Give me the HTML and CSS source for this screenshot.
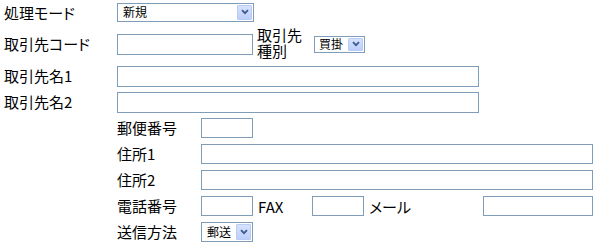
FILE: index.html
```
<!DOCTYPE html>
<html lang="ja">
<head>
<meta charset="utf-8">
<title>取引先登録</title>
<link rel="stylesheet" href="styles.css">
</head>
<body>
<form class="form">
  <div class="lbl">処理モード</div>
  <div class="cell">
    <div class="sel sel-mode"><span class="val">新規</span><span class="btn"><svg width="8" height="6" viewBox="0 0 8 6"><path d="M1 1.2 L4 4.2 L7 1.2" fill="none" stroke="#3f5a8c" stroke-width="1.8"/></svg></span></div>
  </div>

  <div class="lbl">取引先コード</div>
  <div class="cell">
    <input class="inp w-code" type="text">
    <span class="lbl2"><span class="ln">取引先</span><span class="ln">種別</span></span>
    <div class="sel sel-kind"><span class="val">買掛</span><span class="btn"><svg width="8" height="6" viewBox="0 0 8 6"><path d="M1 1.2 L4 4.2 L7 1.2" fill="none" stroke="#3f5a8c" stroke-width="1.8"/></svg></span></div>
  </div>

  <div class="lbl">取引先名1</div>
  <div class="cell"><input class="inp w-name" type="text"></div>

  <div class="lbl">取引先名2</div>
  <div class="cell"><input class="inp w-name" type="text"></div>

  <div class="sub">
    <div class="lbl">郵便番号</div>
    <div class="cell"><input class="inp w-small" type="text"></div>

    <div class="lbl">住所1</div>
    <div class="cell"><input class="inp w-addr" type="text"></div>

    <div class="lbl">住所2</div>
    <div class="cell"><input class="inp w-addr" type="text"></div>

    <div class="lbl">電話番号</div>
    <div class="cell">
      <input class="inp w-small" type="text">
      <span class="tag tag-fax">FAX</span>
      <input class="inp w-small" type="text">
      <span class="tag tag-mail">メール</span>
      <input class="inp w-mail" type="text">
    </div>

    <div class="lbl">送信方法</div>
    <div class="cell">
      <div class="sel sel-send"><span class="val">郵送</span><span class="btn"><svg width="8" height="6" viewBox="0 0 8 6"><path d="M1 1.2 L4 4.2 L7 1.2" fill="none" stroke="#3f5a8c" stroke-width="1.8"/></svg></span></div>
    </div>
  </div>
</form>
</body>
</html>
```
FILE: styles.css
```
html, body {
  margin: 0;
  padding: 0;
  background: #ffffff;
}

body {
  font-family: "Noto Sans CJK JP", "Noto Sans", sans-serif;
  font-size: 15px;
  color: #000000;
  font-feature-settings: "palt";
}

.form {
  display: grid;
  grid-template-columns: 113px 480px;
  grid-template-rows: 25px 38px 26px 26px auto;
  padding-left: 4px;
  margin: 0;
}

.sub {
  grid-column: 2;
  display: grid;
  grid-template-columns: 84px 400px;
  grid-template-rows: 26px 26px 26px 26px 25px;
}

.lbl {
  display: flex;
  align-items: center;
  line-height: 16px;
  white-space: nowrap;
}

.cell {
  display: flex;
  align-items: center;
}

.inp {
  box-sizing: border-box;
  height: 20px;
  margin: 0;
  padding: 0 2px;
  border: 1px solid #7f9db9;
  background: #ffffff;
  font: inherit;
  outline: none;
}

.w-code { width: 136px; height: 21px; }
.w-name { width: 362px; height: 21px; }
.w-small { width: 52px; }
.w-addr { width: 392px; }
.w-mail { width: 110px; }

.lbl2 {
  display: flex;
  flex-direction: column;
  margin-left: 4px;
  width: 50px;
  margin-top: -2px;
}

.lbl2 .ln {
  display: block;
  height: 16px;
  line-height: 16px;
  white-space: nowrap;
}

.tag {
  box-sizing: border-box;
  padding-left: 5px;
  white-space: nowrap;
}
.tag-fax { width: 59px; }
.tag-mail { width: 119px; }

.sel {
  box-sizing: border-box;
  display: flex;
  align-items: stretch;
  border: 1px solid #7f9db9;
  background: #ffffff;
  padding: 1px;
  font-size: 12px;
  line-height: 14px;
  overflow: hidden;
}

.sel .val {
  flex: 1;
  padding-left: 4px;
  display: flex;
  align-items: center;
  white-space: nowrap;
}

.sel .btn {
  width: 15px;
  flex: none;
  box-sizing: border-box;
  border: 1px solid #b9cbf3;
  border-radius: 1px;
  background: linear-gradient(#d6e2fd, #bccffa);
  display: flex;
  align-items: center;
  justify-content: center;
}

.sel-mode { width: 137px; height: 19px; margin-top: -1px; }
.sel-kind { width: 51px; height: 17px; margin-left: 7px; }
.sel-kind .val { padding-left: 3px; }
.sel-send { width: 52px; height: 20px; }
```
